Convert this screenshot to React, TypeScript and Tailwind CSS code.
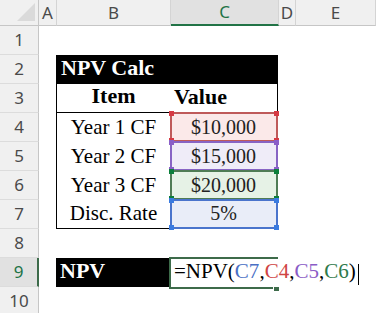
import React from "react";

const serif = { fontFamily: '"Liberation Serif", "Times New Roman", serif' };
const ui = { fontFamily: '"Noto Sans", "Open Sans", sans-serif' };

type Box = { border: string; fill: string; corner: string };

const boxes: Record<number, Box & { text: string }> = {
  4: { border: "border-[#bf5a5a]", fill: "bg-[#fbe9e9]", corner: "bg-[#d63a44]", text: "$10,000" },
  5: { border: "border-[#8764c4]", fill: "bg-[#efecf8]", corner: "bg-[#8a5fc8]", text: "$15,000" },
  6: { border: "border-[#4f7c55]", fill: "bg-[#e6f2e6]", corner: "bg-[#0b7f3a]", text: "$20,000" },
  7: { border: "border-[#4a74cc]", fill: "bg-[#e9edf8]", corner: "bg-[#3a7be0]", text: "5%" },
};

const labels: Record<number, string> = {
  4: "Year 1 CF",
  5: "Year 2 CF",
  6: "Year 3 CF",
  7: "Disc. Rate",
};

function RowHeader({ n }: { n: number }) {
  const sel = n === 9;
  return (
    <div
      className={
        "w-[39px] shrink-0 h-full flex items-center justify-center text-[17px] border-b border-[#dcdcdc] " +
        (sel
          ? "bg-[#e1e1e1] text-[#217346] border-r-2 border-r-[#3d6b4a]"
          : "bg-[#f0f0f0] text-[#4a4a4a] border-r border-r-[#c6c6c6]")
      }
      style={ui}
    >
      {n}
    </div>
  );
}

function Corners({ color }: { color: string }) {
  return (
    <>
      <div className={"absolute -left-[3px] -top-[3px] w-[5px] h-[5px] " + color} />
      <div className={"absolute -right-[3px] -top-[3px] w-[5px] h-[5px] " + color} />
      <div className={"absolute -left-[3px] -bottom-[3px] w-[5px] h-[5px] " + color} />
      <div className={"absolute -right-[3px] -bottom-[3px] w-[5px] h-[5px] " + color} />
    </>
  );
}

function Row({ n }: { n: number }) {
  let b: React.ReactNode = null;
  let c: React.ReactNode = null;
  let bClass = "";
  let cClass = "";

  if (n === 2) {
    bClass = "bg-black border-l border-black";
    cClass = "bg-black border-r border-black";
    b = (
      <span className="text-white font-bold text-[22px] leading-[24px] pl-[4px] pb-[4px] whitespace-nowrap" style={serif}>
        NPV Calc
      </span>
    );
  } else if (n === 3) {
    bClass = "border-l border-b border-black justify-center";
    cClass = "border-r border-black";
    b = (
      <span className="font-bold text-[22px] leading-[24px] pb-[4px]" style={serif}>
        Item
      </span>
    );
    c = (
      <span className="font-bold text-[22px] leading-[24px] pl-[4px] pb-[4px]" style={serif}>
        Value
      </span>
    );
  } else if (n >= 4 && n <= 7) {
    bClass = "border-l border-black justify-center" + (n === 7 ? " border-b" : "");
    const bx = boxes[n];
    cClass = bx.fill + " border-r border-black justify-center" + (n === 7 ? " border-b" : "");
    b = (
      <span className="text-[21px] leading-[24px] pb-[3px] whitespace-nowrap" style={serif}>
        {labels[n]}
      </span>
    );
    c = (
      <>
        <span className="text-[20px] leading-[24px] pb-[3px] relative z-10 text-[#222]" style={serif}>
          {bx.text}
        </span>
        <div className={"absolute left-0 -top-px -right-px h-[30px] border-2 z-20 " + bx.border}>
          <Corners color={bx.corner} />
        </div>
      </>
    );
  } else if (n === 9) {
    bClass = "bg-black";
    b = (
      <span className="text-white font-bold text-[22px] leading-[24px] pl-[4px] pb-[4px]" style={serif}>
        NPV
      </span>
    );
    c = (
      <>
        <div className="absolute -left-px -top-px w-[109px] h-[31px] border-l-2 border-t-2 border-[#3d6b4a]" />
        <div className="absolute -left-px -bottom-[2px] w-[104px] h-[2px] bg-[#3d6b4a]" />
        <div className="absolute left-[104px] -bottom-[4px] w-[5px] h-[4px] bg-[#3d6b4a]" />
        <span className="relative z-10 text-[21px] leading-[24px] pl-[4px] pb-[4px] whitespace-nowrap flex items-end" style={serif}>
          <span>=NPV(</span>
          <span className="text-[#4a6fc4]">C7</span>
          <span>,</span>
          <span className="text-[#cf4444]">C4</span>
          <span>,</span>
          <span className="text-[#8a5cc6]">C5</span>
          <span>,</span>
          <span className="text-[#2f7a4c]">C6</span>
          <span>)</span>
          <span className="inline-block w-px h-[21px] bg-black ml-[2px] mb-[-2px]" />
        </span>
      </>
    );
  }

  return (
    <div className="flex h-[29px]">
      <RowHeader n={n} />
      <div className="w-[17px] shrink-0" />
      <div className={"w-[114px] shrink-0 h-full flex items-end " + bClass}>{b}</div>
      <div className={"w-[108px] shrink-0 h-full flex items-end relative " + cClass}>{c}</div>
      <div className="w-[18px] shrink-0" />
      <div className="flex-1" />
    </div>
  );
}

export default function App() {
  const colHead = "h-full flex items-center justify-center text-[17px] border-r border-[#d4d4d4] border-b border-b-[#c6c6c6]";
  return (
    <div className="w-[376px] h-[313px] overflow-hidden bg-white text-black">
      <div className="flex h-[26px] bg-[#f0f0f0] text-[#4a4a4a]" style={ui}>
        <div className="w-[39px] shrink-0 h-full relative border-r border-b border-[#c6c6c6]">
          <svg className="absolute left-0 top-0" width="38" height="25" viewBox="0 0 38 25">
            <polygon points="35,3 35,21 17,21" fill="#dadada" />
          </svg>
        </div>
        <div className={"w-[18px] shrink-0 " + colHead}>A</div>
        <div className={"w-[114px] shrink-0 " + colHead}>B</div>
        <div className="w-[108px] shrink-0 h-full flex items-center justify-center text-[17px] bg-[#e1e1e1] text-[#217346] border-r border-[#d4d4d4] border-b-2 border-b-[#217346]">
          C
        </div>
        <div className={"w-[17px] shrink-0 " + colHead}>D</div>
        <div className={"flex-1 " + colHead}>E</div>
      </div>
      {[1, 2, 3, 4, 5, 6, 7, 8, 9, 10].map((n) => (
        <Row key={n} n={n} />
      ))}
    </div>
  );
}
